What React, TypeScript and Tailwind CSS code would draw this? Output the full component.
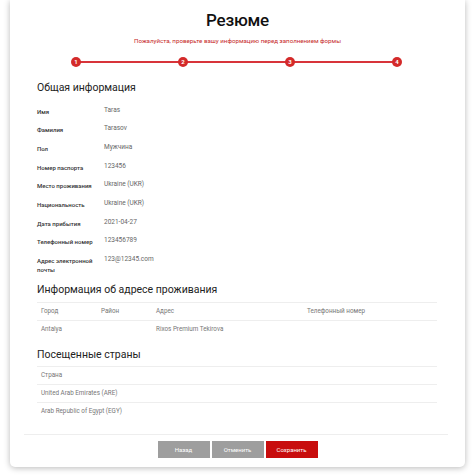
import React from "react";

const rows: [string, string][] = [
  ["Имя", "Taras"],
  ["Фамилия", "Tarasov"],
  ["Пол", "Мужчина"],
  ["Номер паспорта", "123456"],
  ["Место проживания", "Ukraine (UKR)"],
  ["Национальность", "Ukraine (UKR)"],
  ["Дата прибытия", "2021-04-27"],
  ["Телефонный номер", "123456789"],
];

export default function App() {
  return (
    <div className="w-[474px] h-[476px] bg-white overflow-hidden" style={{ fontFamily: "Roboto, 'Liberation Sans', sans-serif" }}>
      <div className="ml-[10px] w-[455px] h-[467px] bg-white rounded-b-[5px] shadow-[0_1px_6px_rgba(0,0,0,0.28)] flex flex-col">
        <div className="pt-[8px] h-[32px] text-center text-[17px] leading-[24px] font-medium tracking-[-0.2px] text-[#111]">Резюме</div>
        <div className="mt-[4.5px] text-center text-[6.2px] leading-[9px] text-[#c62828]">
          Пожалуйста, проверьте вашу информацию перед заполнением формы
        </div>
        <div className="mt-[11.5px] relative h-[10px] ml-[61px] w-[331px]">
          <div className="absolute left-[5px] right-[5px] top-[4px] h-[2px] bg-[#d8343a]" />
          <div className="relative flex justify-between">
            {[1, 2, 3, 4].map((n) => (
              <div key={n} className="w-[10px] h-[10px] rounded-full bg-[#d42a2a] text-white text-[6px] leading-[10px] font-bold text-center">
                {n}
              </div>
            ))}
          </div>
        </div>
        <div className="px-[27px]">
          <div className="mt-[13px] text-[10.5px] leading-[16px] text-[#222]">Общая информация</div>
          <div className="mt-[5.5px]">
            {rows.map(([l, v]) => (
              <div key={l} className="h-[18.7px] pt-[5px] flex text-[6px] leading-[9px]">
                <div className="w-[67px] text-[#333] font-medium">{l}</div>
                <div className="-mt-px text-[#666] text-[6.5px]">{v}</div>
              </div>
            ))}
            <div className="h-[30.9px] pt-[5px] flex text-[6px] leading-[9px]">
              <div className="w-[67px] text-[#333] font-medium">Адрес электронной<br />почты</div>
              <div className="-mt-px text-[#666] text-[6.5px]">123@12345.com</div>
            </div>
          </div>
          <div className="text-[10.5px] leading-[16px] text-[#222]">Информация об адресе проживания</div>
          <div className="mt-[4px] w-[400px] border-t border-[#eee] text-[6.3px] text-[#777]">
            <div className="h-[18px] flex items-center border-b border-[#eee] px-[4px]">
              <div className="w-[60px]">Город</div>
              <div className="w-[55px]">Район</div>
              <div className="w-[151px]">Адрес</div>
              <div>Телефонный номер</div>
            </div>
            <div className="h-[18px] flex items-center px-[4px]">
              <div className="w-[60px]">Antalya</div>
              <div className="w-[55px]"></div>
              <div className="w-[151px]">Rixos Premium Tekirova</div>
              <div></div>
            </div>
          </div>
          <div className="mt-[8px] text-[10.5px] leading-[16px] text-[#222]">Посещенные страны</div>
          <div className="mt-[3px] w-[400px] border-t border-[#eee] text-[6.3px] text-[#777]">
            <div className="h-[18px] flex items-center border-b border-[#eee] px-[4px]">Страна</div>
            <div className="h-[18px] flex items-center border-b border-[#eee] px-[4px]">United Arab Emirates (ARE)</div>
            <div className="h-[18px] flex items-center px-[4px]">Arab Republic of Egypt (EGY)</div>
          </div>
        </div>
        <div className="mt-[13px] ml-[14px] mr-[17px] border-t border-[#eee]" />
        <div className="mt-[6px] flex justify-center gap-[2px] text-[6px] text-white">
          <button className="w-[52px] h-[17px] bg-[#9e9e9e]">Назад</button>
          <button className="w-[52px] h-[17px] bg-[#9e9e9e]">Отменить</button>
          <button className="w-[52px] h-[17px] bg-[#c80d0d]">Сохранить</button>
        </div>
      </div>
    </div>
  );
}
